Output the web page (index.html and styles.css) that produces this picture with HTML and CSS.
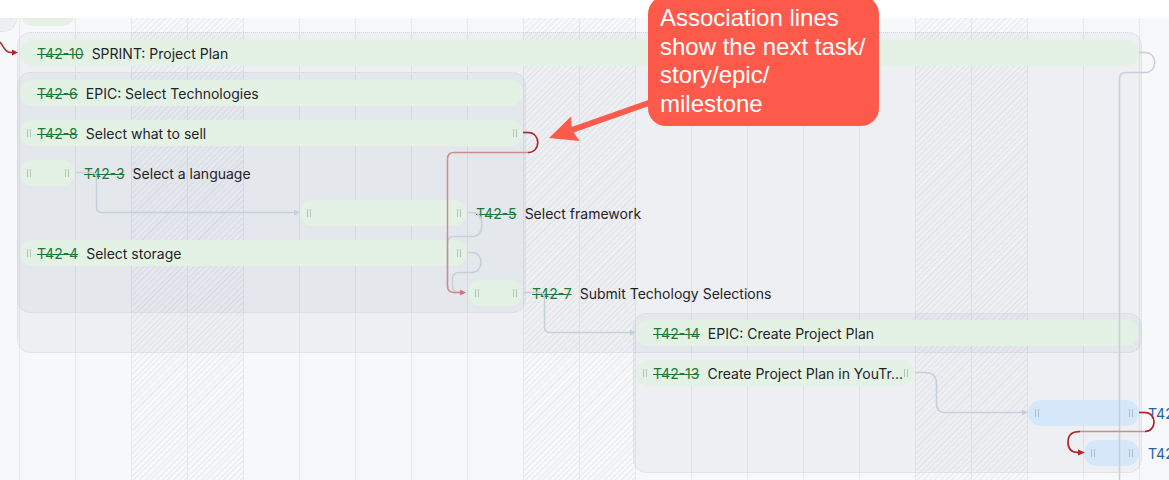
FILE: index.html
```html
<!DOCTYPE html>
<html lang="en">
<head>
<meta charset="utf-8">
<title>Gantt chart</title>
<link rel="stylesheet" href="styles.css">
</head>
<body>
<div class="gantt">
  <div class="days">
    <div class="day"></div>
    <div class="day"></div>
    <div class="day"></div>
    <div class="day weekend"></div>
    <div class="day weekend"></div>
    <div class="day"></div>
    <div class="day"></div>
    <div class="day"></div>
    <div class="day"></div>
    <div class="day"></div>
    <div class="day weekend"></div>
    <div class="day weekend"></div>
    <div class="day"></div>
    <div class="day"></div>
    <div class="day"></div>
    <div class="day"></div>
    <div class="day"></div>
    <div class="day weekend"></div>
    <div class="day weekend"></div>
    <div class="day"></div>
    <div class="day"></div>
    <div class="day"></div>
    <div class="day"></div>
  </div>

  <div class="groups">
    <div class="group" style="left:-30px;top:-30px;width:47px;height:62px"></div>
    <div class="group" style="left:17px;top:32px;width:1125px;height:321px"></div>
    <div class="group" style="left:17px;top:72px;width:509px;height:241px"></div>
    <div class="group" style="left:633px;top:313px;width:509px;height:160px"></div>
  </div>

  <div class="rows">
    <div class="row"><div class="bar" style="margin-left:20px;width:55px"></div></div>
    <div class="row">
      <div class="bar inside" style="margin-left:20px;width:1119px"><span class="key">T42-10</span><span class="title">SPRINT: Project Plan</span></div>
    </div>
    <div class="row">
      <div class="bar inside" style="margin-left:20px;width:503px"><span class="key">T42-6</span><span class="title">EPIC: Select Technologies</span></div>
    </div>
    <div class="row">
      <div class="bar inside handles" style="margin-left:20px;width:503px"><span class="key">T42-8</span><span class="title">Select what to sell</span></div>
    </div>
    <div class="row">
      <div class="bar handles" style="margin-left:20px;width:55px"></div>
      <div class="label"><span class="key">T42-3</span><span class="title">Select a language</span></div>
    </div>
    <div class="row">
      <div class="bar handles" style="margin-left:300px;width:167px"></div>
      <div class="label"><span class="key">T42-5</span><span class="title">Select framework</span></div>
    </div>
    <div class="row">
      <div class="bar inside handles" style="margin-left:20px;width:447px"><span class="key">T42-4</span><span class="title">Select storage</span></div>
    </div>
    <div class="row">
      <div class="bar handles" style="margin-left:468px;width:55px"></div>
      <div class="label"><span class="key">T42-7</span><span class="title">Submit Techology Selections</span></div>
    </div>
    <div class="row">
      <div class="bar inside" style="margin-left:636px;width:503px"><span class="key">T42-14</span><span class="title">EPIC: Create Project Plan</span></div>
    </div>
    <div class="row">
      <div class="bar inside handles" style="margin-left:636px;width:278px"><span class="key">T42-13</span><span class="title">Create Project Plan in YouTr...</span></div>
    </div>
    <div class="row">
      <div class="bar blue handles" style="margin-left:1028px;width:111px"></div>
      <div class="label"><span class="key open">T42</span></div>
    </div>
    <div class="row">
      <div class="bar blue handles" style="margin-left:1084px;width:55px"></div>
      <div class="label"><span class="key open">T42</span></div>
    </div>
  </div>

  <svg class="links" width="1169" height="480" viewBox="0 0 1169 480">
    <g class="link-grey">
      <path d="M75,172.5 H91 Q96.5,172.5 96.5,178 V207 Q96.5,212.5 102,212.5 H295"/>
      <path d="M467,212.5 H473 C485,212.5 485,236.5 473,236.5 H454 Q447.5,236.5 447.5,243 V286 Q447.5,292.5 454,292.5 H461"/>
      <path d="M467,252.5 H472 C484,252.5 484,272.5 472,272.5 H459 Q452.5,272.5 452.5,279 V286 Q452.5,292.5 459,292.5 H461"/>
      <path d="M523,292.5 H539 Q544.5,292.5 544.5,298 V327 Q544.5,332.5 550,332.5 H631"/>
      <path d="M915,372.5 H925 Q936.5,372.5 936.5,384 V404 Q936.5,412.5 945,412.5 H1023"/>
      <path d="M1139,52.5 H1145 C1158,52.5 1158,72.5 1145,72.5 H1126 Q1119.5,72.5 1119.5,79 V480"/>
    </g>
    <g class="head-grey">
      <polygon points="294,209.5 300,212.5 294,215.5"/>
      <polygon points="630,329.5 636,332.5 630,335.5"/>
      <polygon points="1022,409.5 1028,412.5 1022,415.5"/>
    </g>
    <g class="link-red-muted">
      <path d="M523,132.5 H528 C541,132.5 541,152.5 528,152.5 H454 Q447.5,152.5 447.5,159 V286 Q447.5,292.5 454,292.5 H461"/>
      <path d="M1139,412.5 H1145 C1157,412.5 1157,431.5 1145,431.5 H1080 Q1068,431.5 1068,442 Q1068,452.5 1078,452.5 H1079"/>
    </g>
    <g class="link-red">
      <path d="M0,42 C4,47 5,52.5 11,52.5 H13"/>
      <path d="M523,132.5 H528 C541,132.5 541,152.5 528,152.5"/>
      <path d="M1139,412.5 H1145 C1157,412.5 1157,431.5 1145,431.5"/>
      <path d="M1080,431.5 Q1068,431.5 1068,442 Q1068,452.5 1078,452.5 H1079"/>
    </g>
    <g class="head-red">
      <polygon points="12,49.5 18,52.5 12,55.5"/>
      <polygon points="1078,449.5 1085,452.5 1078,455.5"/>
    </g>
    <g class="head-red-muted">
      <polygon points="460,289.5 466,292.5 460,295.5"/>
    </g>
  </svg>
</div>

<div class="topbar"></div>

<svg class="pointer" width="1169" height="480" viewBox="0 0 1169 480">
  <polygon points="549,138 571,116.4 571.6,126.9 664,94.4 666,100 573.6,132.5 579.7,141"/>
</svg>

<div class="callout">Association lines<br>show the next task/<br>story/epic/<br>milestone</div>
</body>
</html>
```

FILE: styles.css
```css
html, body {
  margin: 0;
  padding: 0;
}

body {
  position: relative;
  width: 1169px;
  height: 480px;
  overflow: hidden;
  background: #ffffff;
  font-family: Inter, "Noto Sans", "Liberation Sans", sans-serif;
  font-size: 14px;
  color: #1f2328;
}

.gantt {
  position: relative;
  height: 480px;
  overflow: hidden;
  background: #f7f8fa;
}

/* day columns */
.days {
  position: absolute;
  top: 0;
  bottom: 0;
  left: -36px;
  display: flex;
  z-index: 0;
}

.day {
  flex: 0 0 56px;
  box-sizing: border-box;
  border-right: 1px solid #e6e8eb;
}

.day.weekend {
  background: repeating-linear-gradient(135deg,
    rgba(0, 0, 0, 0.04) 0 1.5px,
    rgba(0, 0, 0, 0) 1.5px 4px);
}

/* group containers */
.groups {
  position: absolute;
  inset: 0;
  z-index: 1;
}

.group {
  position: absolute;
  box-sizing: border-box;
  border: 1px dotted #d3d7dd;
  border-radius: 14px;
  background: rgba(110, 125, 150, 0.07);
}

/* rows */
.rows {
  position: relative;
  z-index: 2;
  margin-top: -7px;
  display: flex;
  flex-direction: column;
}

.row {
  height: 40px;
  display: flex;
  align-items: center;
  white-space: nowrap;
}

.bar {
  position: relative;
  flex: none;
  box-sizing: border-box;
  height: 26px;
  border-radius: 13px;
  background: #e3f2e4;
  display: flex;
  align-items: center;
}

.bar.blue {
  background: #d4e8fa;
}

.bar.inside {
  padding-left: 17px;
  overflow: hidden;
}

.bar.handles::before,
.bar.handles::after {
  content: "";
  position: absolute;
  top: 9px;
  width: 4px;
  height: 8px;
  box-sizing: border-box;
  border-left: 1px solid rgba(90, 100, 110, 0.32);
  border-right: 1px solid rgba(90, 100, 110, 0.32);
}

.bar.handles::before {
  left: 7px;
}

.bar.handles::after {
  right: 6px;
}

.label {
  flex: none;
  margin-left: 9px;
  display: flex;
  align-items: center;
}

.key {
  color: #1f7a36;
  text-decoration: line-through;
  margin-right: 8px;
}

.key.open {
  color: #1f62a8;
  text-decoration: none;
  margin-right: 0;
}

.title {
  color: #1f2328;
}

/* association lines */
.links {
  position: absolute;
  left: 0;
  top: 0;
  z-index: 3;
  pointer-events: none;
}

.link-grey path {
  fill: none;
  stroke: #c7cfd9;
  stroke-width: 1.5;
}

.head-grey polygon {
  fill: #c7cfd9;
}

.link-red-muted path {
  fill: none;
  stroke: #cf8a8d;
  stroke-width: 1.5;
}

.link-red path {
  fill: none;
  stroke: #b3252d;
  stroke-width: 1.5;
}

.head-red polygon {
  fill: #b3252d;
}

.head-red-muted polygon {
  fill: #c77b7f;
}

/* header strip */
.topbar {
  position: absolute;
  top: 0;
  left: 0;
  width: 1169px;
  height: 18px;
  background: #ffffff;
  z-index: 4;
}

/* annotation */
.pointer {
  position: absolute;
  left: 0;
  top: 0;
  z-index: 5;
  pointer-events: none;
}

.pointer polygon {
  fill: #fd5a4b;
}

.callout {
  position: absolute;
  left: 648px;
  top: -4px;
  width: 231px;
  box-sizing: border-box;
  padding: 8px 12px;
  border-radius: 18px;
  background: #fd5a4b;
  color: #ffffff;
  font-family: "Liberation Sans", Arial, sans-serif;
  font-size: 24px;
  line-height: 28.5px;
  white-space: nowrap;
  z-index: 6;
}
```
